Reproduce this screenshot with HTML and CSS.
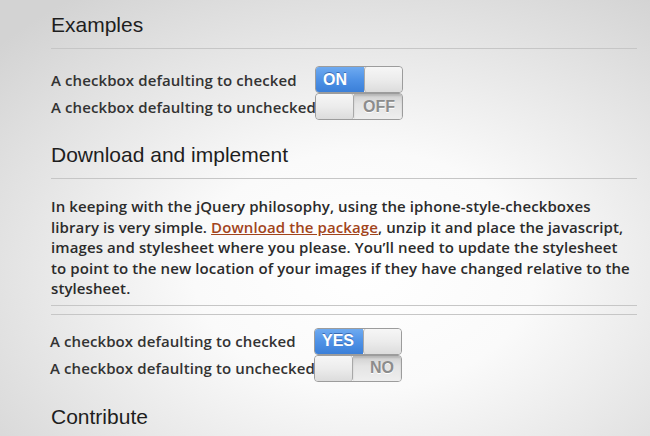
FILE: index.html
```html
<!DOCTYPE html>
<html lang="en">
<head>
<meta charset="utf-8">
<title>iphone-style-checkboxes</title>
<link rel="stylesheet" href="styles.css">
</head>
<body>
<main class="page">
  <section class="section">
    <h2 class="title">Examples</h2>
    <hr class="rule">
    <div class="examples">
      <span class="label">A checkbox defaulting to checked</span>
      <div class="toggle is-on"><span class="state state-on">ON</span><span class="handle"></span></div>
      <span class="label">A checkbox defaulting to unchecked</span>
      <div class="toggle is-off"><span class="handle"></span><span class="state state-off">OFF</span></div>
    </div>
  </section>

  <section class="section">
    <h2 class="title">Download and implement</h2>
    <hr class="rule">
    <p class="text">In keeping with the jQuery philosophy, using the iphone-style-checkboxes library is very simple. <a class="link" href="#">Download the package</a>, unzip it and place the javascript, images and stylesheet where you please. You’ll need to update the stylesheet to point to the new location of your images if they have changed relative to the stylesheet.</p>
    <hr class="rule rule-tight">
    <hr class="rule rule-second">
    <div class="examples examples-shift">
      <span class="label">A checkbox defaulting to checked</span>
      <div class="toggle is-on"><span class="state state-on">YES</span><span class="handle"></span></div>
      <span class="label">A checkbox defaulting to unchecked</span>
      <div class="toggle is-off"><span class="handle"></span><span class="state state-off">NO</span></div>
    </div>
  </section>

  <section class="section">
    <h2 class="title">Contribute</h2>
  </section>
</main>
</body>
</html>
```

FILE: styles.css
```css
html, body {
  margin: 0;
  padding: 0;
  height: 100%;
}

body {
  background: radial-gradient(ellipse 75% 78% at 56% 62%, #ffffff 0%, #fafafa 35%, #d3d3d3 100%);
  background-attachment: fixed;
  font-family: "Open Sans", "Noto Sans", "DejaVu Sans", sans-serif;
  color: #333;
  overflow: hidden;
}

.page {
  width: 586px;
  padding: 12px 0 0 51px;
}

.section + .section {
  margin-top: 22px;
}

.title {
  margin: 0;
  font-family: "Liberation Sans", Arial, sans-serif;
  font-weight: normal;
  font-size: 21px;
  line-height: 26px;
  color: #1e1e1e;
}

.rule {
  margin: 10px 0 0;
  border: 0;
  border-top: 1px solid #c6c6c6;
  height: 0;
}

.rule-tight {
  margin-top: 6px;
}

.rule-second {
  margin-top: 8px;
}

.examples {
  margin-top: 17px;
  display: grid;
  grid-template-columns: 264px 88px;
  grid-auto-rows: 27px;
  align-items: center;
}

.examples-shift {
  margin-top: 13px;
  margin-left: -1px;
}

.label {
  font-size: 15px;
  font-weight: 600;
  color: #333;
  white-space: nowrap;
  letter-spacing: 0.1px;
}

.text {
  margin: 17px 0 0;
  max-width: 580px;
  font-size: 15px;
  line-height: 20.6px;
  font-weight: 600;
  letter-spacing: 0.1px;
  color: #2b2b2b;
}

.link {
  color: #a2441b;
  text-decoration: underline;
}

.toggle {
  box-sizing: border-box;
  width: 88px;
  height: 27px;
  display: flex;
  border: 1px solid #9c9c9c;
  border-radius: 4px;
  overflow: hidden;
  font-family: "Liberation Sans", Arial, sans-serif;
  font-weight: bold;
  font-size: 16px;
}

.state {
  flex: 1;
  display: flex;
  align-items: center;
  line-height: 1;
}

.state-on {
  padding-left: 7px;
  color: #fff;
  background: linear-gradient(#6eaaf0 0%, #4f92e6 50%, #3b7fd8 100%);
  text-shadow: 0 -1px 0 rgba(30, 70, 140, 0.6);
}

.state-off {
  justify-content: flex-end;
  padding-right: 7px;
  color: #8c8c8c;
  background: linear-gradient(#cfcfcf 0%, #e4e4e4 40%, #eeeeee 100%);
  box-shadow: inset 0 2px 2px rgba(0, 0, 0, 0.12);
  text-shadow: 0 1px 0 #fff;
}

.handle {
  box-sizing: border-box;
  width: 38px;
  flex: none;
  background: linear-gradient(#f6f6f6 0%, #ececec 50%, #dcdcdc 100%);
  border-radius: 3px;
}

.is-on .handle {
  border-left: 1px solid #a8a8a8;
}

.is-off .handle {
  border-right: 1px solid #a8a8a8;
}
```
